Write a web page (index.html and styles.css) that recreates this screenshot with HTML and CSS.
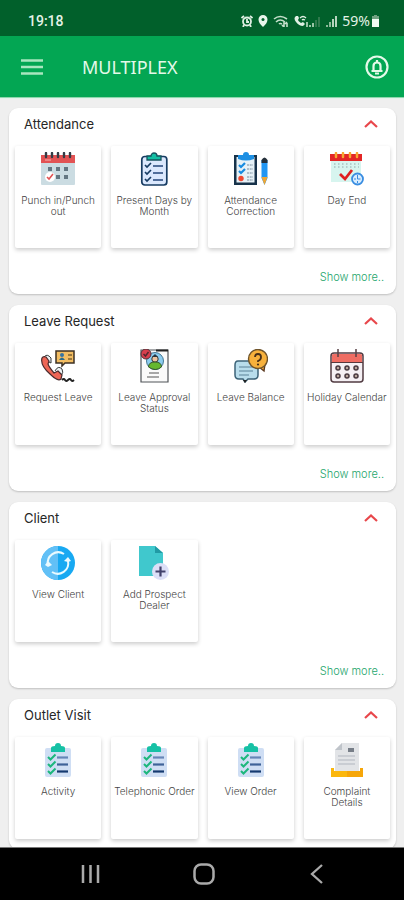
FILE: index.html
```html
<!DOCTYPE html>
<html lang="en">
<head>
<meta charset="utf-8">
<meta name="viewport" content="width=device-width, initial-scale=1">
<title>Multiplex</title>
<link rel="stylesheet" href="styles.css">
</head>
<body>
<svg class="sprite" aria-hidden="true">
  <symbol id="chevron" viewBox="0 0 14 8"><path d="M1 7 7 1.500 13 7" fill="none" stroke="#e8474b" stroke-width="2.200"/></symbol>
  <symbol id="punch" viewBox="0 0 34 34">
    <rect y="3" width="34" height="30" rx="1" fill="#cbdce2"/><path d="M0 3h34v8H0z" fill="#e25354"/>
    <path d="M5 1v4M11 1v4M17 1v4M23 1v4M29 1v4" stroke="#343c46" stroke-width="2.400" stroke-linecap="round"/>
    <path d="M4 8h6" stroke="#f6b3b0"/>
    <path d="M7 15h4v4H7zM15 15h4v4h-4zM23 15h4v4h-4zM15 23h4v4h-4zM23 23h4v4h-4z" fill="#647782"/>
    <circle cx="9" cy="25" r="5" fill="#fff"/><path d="m6 25 2 2 4-5" stroke="#e25354" stroke-width="1.600" fill="none"/>
  </symbol>
  <symbol id="present" viewBox="0 0 34 34">
    <rect x="4.800" y="4.500" width="25" height="28.500" rx="3" fill="#dbe8fd" stroke="#173c63" stroke-width="1.700"/>
    <path d="M10 8V4h4a3 3 0 0 1 6 0h4v4z" fill="#13bfa3" stroke="#17535f" stroke-width="1.300"/>
    <path d="m8 13 2 2 4-4M8 20l2 2 4-4M8 27l2 2 4-4" fill="none" stroke="#173c63" stroke-width="1.700"/>
    <path d="M16 14h10M16 21h10M16 28h10" stroke="#516e9b" stroke-width="2"/>
  </symbol>
  <symbol id="correction" viewBox="0 0 34 34">
    <path d="M0 3h23v30H0z" fill="#17324a"/><path d="M2.500 5h18v25.500h-18z" fill="#e6f1f7"/>
    <path d="M4 7V3h5a3 3 0 0 1 6 0h5v4q-8 3-16 0z" fill="#1d8fe3"/>
    <path d="m5 13 2 2 4-4M5 19l2 2 4-4" fill="none" stroke="#168be0" stroke-width="2.200"/>
    <path d="M13 13h6M13 17h6M13 21h6M13 25h6M13 28h6" stroke="#788c9c" stroke-dasharray="2 .7"/>
    <circle cx="7" cy="26.500" r="2.700" fill="#f04830"/>
    <path d="M27.500 8h6v18l-3 7-3-7z" fill="#2196f3"/><path d="M27.500 11V8q3-5 6 0v3z" fill="#25303b"/><path d="M27.500 25h6l-3 8z" fill="#f0a633"/>
  </symbol>
  <symbol id="dayend" viewBox="0 0 34 34">
    <path d="M1 5h30v25H1z" fill="#d7f5ef"/><path d="M0 2h32v7H0z" fill="#e32626"/>
    <path d="M6 1v4M13 1v4M20 1v4M27 1v4" stroke="#f7a832" stroke-width="2.500" stroke-linecap="round"/>
    <path d="M4 12h25M4 15h25" stroke="#91a9ab" stroke-width="1.200" stroke-dasharray="1.500 2.500"/>
    <path d="m10 22 5 5 7-9" fill="none" stroke="#df2020" stroke-width="2.800"/>
    <circle cx="27.500" cy="27" r="5.500" fill="#d8edff" stroke="#398de1" stroke-width="1.800"/><path d="M27.500 23v4h3M24 27h2M27.500 29v2" fill="none" stroke="#398de1"/>
  </symbol>
  <symbol id="phone" viewBox="0 0 34 34">
    <path d="M15 2h18v12h-9l-3 3v-3h-6z" fill="#f2bd62" stroke="#3c3125" stroke-width="1.500"/>
    <circle cx="21" cy="6" r="2" fill="#3674a3"/><path d="M18 11q3-5 6 0z" fill="#276b91"/><path d="M27 6h4M27 10h4" stroke="#7d6132" stroke-width="1.500"/>
    <path d="M3 8q3-4 7 1v5l-4-2M14 22q3-6 7-2 2 3-1 7" fill="#eef2f3" stroke="#34383a"/>
    <path d="M1 9q-2 7 8 16 8 8 11 5l1-4-4-4-4 2Q8 18 7 15l1-3-3-4q-3-1-4 1z" fill="#ee6656" stroke="#4a2b2d" stroke-width="1.200"/>
    <path d="M21 31q2-2 3 0t3 0 3 0 3 0" fill="none" stroke="#222" stroke-width="1.800"/>
  </symbol>
  <symbol id="approval" viewBox="0 0 34 34">
    <path d="M4 1h27v32H4z" fill="#fafafa" stroke="#505458" stroke-width="1.200"/><path d="M19 1.500h12" stroke="#222" stroke-width="2"/>
    <circle cx="18" cy="12" r="8.500" fill="#8bccef" stroke="#447794"/><circle cx="18" cy="10" r="3.200" fill="#edc29d" stroke="#333"/><path d="M11.500 18q0-5 6.500-5t6.500 5q-6 5-13 0z" fill="#65b82f" stroke="#33552c"/><path d="m15 8 3-3 3 3z" fill="#263440"/>
    <circle cx="9" cy="5" r="5" fill="#d83e4c" stroke="#543038"/><path d="m6.500 5 2 2 3-4" fill="none" stroke="#52272e" stroke-width="1.500"/>
    <path d="M12 24h10M10 28h12" stroke="#555"/>
  </symbol>
  <symbol id="balance" viewBox="0 0 34 34">
    <path d="M4 12h16q4 0 4 4v10q0 4-4 4h-6l-3 3-2-3H5q-4 0-4-4V16q0-4 3-4z" fill="#b8ddec" stroke="#3c6378" stroke-width="1.500"/>
    <path d="M5 18h14M5 22h14M5 26h10" stroke="#5a8298"/><path d="m9 31 2 3 2-3z" fill="#222"/>
    <path d="m25 18 5 4 1-7" fill="#f7b13c" stroke="#5b3920" stroke-width="1.400"/><circle cx="24" cy="10" r="9.500" fill="#f7b13c" stroke="#6f542b" stroke-width="1.400"/>
    <path d="M21 8q0-3 3-3t3 3-3 4v1" fill="none" stroke="#493018" stroke-width="1.800"/><circle cx="24" cy="15.500" r="1.100" fill="#493018"/>
  </symbol>
  <symbol id="holiday" viewBox="0 0 34 34">
    <rect x="1" y="4" width="32" height="29" rx="3" fill="#f5f0f4" stroke="#513b42" stroke-width="1.500"/><path d="M2 13V6q0-1 2-1h26q2 0 2 1v7z" fill="#ef6d63"/><path d="M1 13.500h32" stroke="#57383d"/>
    <path d="M8 0v8M26 0v8" stroke="#574045" stroke-width="1.500"/>
    <g fill="#baa79d" stroke="#493940" stroke-width="1.500"><circle cx="8" cy="19" r="2"/><circle cx="17" cy="19" r="2"/><circle cx="26" cy="19" r="2"/><circle cx="8" cy="27" r="2"/><circle cx="17" cy="27" r="2"/><circle cx="26" cy="27" r="2"/></g>
  </symbol>
  <symbol id="client" viewBox="0 0 34 34">
    <circle cx="17" cy="17" r="17" fill="#18a9f2"/><path d="M17 0a17 17 0 0 0 0 34z" fill="#62c0f6"/>
    <path d="M7 19a10.500 10.500 0 0 1 16-11M27 15a10.500 10.500 0 0 1-16 11" fill="none" stroke="#e9faff" stroke-width="2"/>
    <path d="m4 19 3-4 4 4-4 2zM30 15l-3-4-4 4 4 1z" fill="#e9faff"/>
  </symbol>
  <symbol id="prospect" viewBox="0 0 34 34">
    <path d="M2 0h16l8 7v23H2z" fill="#40c8cd"/><path d="M18 0v7h8z" fill="#219ba5"/><circle cx="23.500" cy="25.500" r="8.500" fill="#dcdff7"/><path d="M18.500 25.500h10M23.500 20.500v10" stroke="#42416b" stroke-width="2.200"/>
  </symbol>
  <symbol id="checklist" viewBox="0 0 34 34">
    <rect x="4" y="5" width="26" height="29" rx="2" fill="#cfdef4"/><path d="M10 9V5q0-2 4-2a3 3 0 0 1 6 0q4 0 4 2v4z" fill="#16c1a5"/>
    <path d="m7 14 2.500 2.500 5-5M7 21l2.500 2.500 5-5M7 28l2.500 2.500 5-5" fill="none" stroke="#1cb77c" stroke-width="2"/>
    <path d="M16 14.500h11" stroke="#6786b7" stroke-width="2.200"/><path d="M16 21.500h11" stroke="#3e6298" stroke-width="2.200"/><path d="M16 28.500h11" stroke="#153a70" stroke-width="2.200"/>
  </symbol>
  <symbol id="complaint" viewBox="0 0 34 34">
    <path d="M5 7 12 0h17v28H5z" fill="#e2e4e7"/><path d="M5 7h7V0z" fill="#bfc4ca"/><path d="M18 5h6v4h-6z" fill="#777e88"/><path d="M8 13h17M8 17h17M8 21h17" stroke="#b1b6bf"/>
    <path d="M1 25h3v3h26v-3h3v9H1z" fill="#fbb70d"/><path d="M17 28h13v-3h3v9H17z" fill="#f6a609"/>
  </symbol>
</svg>

<div class="screen">
  <div class="status">
    <time>19:18</time>
    <div class="indicators">
      <svg width="12" height="12" viewBox="0 0 12 12" fill="none" stroke="#e0f0e4" stroke-width="1.800" aria-label="Alarm"><circle cx="6" cy="6.500" r="4"/><path d="M6 4v3h2M.5 3 3 1M11.500 3 9 1M3 10l-1 2M9 10l1 2"/></svg>
      <svg width="10" height="12" viewBox="0 0 10 12" aria-label="Location"><path d="M5 0a4.500 4.500 0 0 1 4.500 4.500Q9.500 8 5 12 .5 8 .5 4.500A4.500 4.500 0 0 1 5 0z" fill="#e9f6ec"/><circle cx="5" cy="4.500" r="1.500" fill="#01602b"/></svg>
      <svg width="16" height="12" viewBox="0 0 16 12" fill="none" stroke="#c4dfca" stroke-width="1.600" aria-label="Wi-Fi"><path d="M1 4q6-5 13 0M3 7q4-4 9 0M6 9q1-1 3 0"/><path d="M11 7v5M9 10l2 2M14 12V8M12 9l2-2"/></svg>
      <svg width="27" height="12" viewBox="0 0 27 12" aria-label="Wi-Fi calling"><path d="M2 1q-3 2 0 6t7 4l2-2-2-2-2 1Q4 6 4 5l1-2-1-2z" fill="#e0f0e4"/><path d="M6 3q3-3 6 0M8 5q1-1 3 0" fill="none" stroke="#e0f0e4" stroke-width="1.300"/><path d="M13 7v5M16 10v2M19 8v4" stroke="#b4d5bb" stroke-width="1.700"/><path d="M22 5v7M25 2v10" stroke="#397e54" stroke-width="1.700"/></svg>
      <svg width="11" height="12" viewBox="0 0 11 12" aria-label="Signal"><path d="M1 10v2M4 7v5" stroke="#9bc2a5" stroke-width="1.800"/><path d="M7 4v8M10 1v11" stroke="#c9e0ce" stroke-width="1.800"/></svg>
      <span class="battery">59%<svg width="9" height="12" viewBox="0 0 9 12" aria-hidden="true"><path d="M3 0h3v1h2v4H1V1h2z" fill="#6fa180"/><path d="M1 4h7v8H1z" fill="#f0faf2"/></svg></span>
    </div>
  </div>
  <header class="appbar">
    <button class="icon-button" aria-label="Menu"><svg width="22" height="16" viewBox="0 0 22 16"><path d="M0 1.500h22M0 8h22M0 14.500h22" stroke="#a9e6bf" stroke-width="2.600"/></svg></button>
    <h1>MULTIPLEX</h1>
    <button class="icon-button" aria-label="Notifications"><svg width="24" height="24" viewBox="0 0 24 24"><circle cx="12" cy="12" r="10.500" fill="none" stroke="#e4f9e9" stroke-width="2.200"/><path d="M6.500 16h11M8.500 16V11q0-3.500 3.500-3.500t3.500 3.500v5M12 5v2" fill="none" stroke="#e4f9e9" stroke-width="2.200"/><path d="M10 18.500h4" stroke="#e4f9e9" stroke-width="2"/></svg></button>
  </header>

  <main>
    <section class="card">
      <div class="card-head"><h2>Attendance</h2><button class="toggle" aria-label="Collapse Attendance"><svg><use href="#chevron"/></svg></button></div>
      <div class="tiles">
        <button class="tile"><svg><use href="#punch"/></svg><span>Punch in/Punch out</span></button>
        <button class="tile"><svg><use href="#present"/></svg><span>Present Days by Month</span></button>
        <button class="tile"><svg><use href="#correction"/></svg><span>Attendance Correction</span></button>
        <button class="tile"><svg><use href="#dayend"/></svg><span>Day End</span></button>
      </div>
      <a class="more" href="#">Show more..</a>
    </section>
    <section class="card">
      <div class="card-head"><h2>Leave Request</h2><button class="toggle" aria-label="Collapse Leave Request"><svg><use href="#chevron"/></svg></button></div>
      <div class="tiles">
        <button class="tile"><svg><use href="#phone"/></svg><span>Request Leave</span></button>
        <button class="tile"><svg><use href="#approval"/></svg><span>Leave Approval Status</span></button>
        <button class="tile"><svg><use href="#balance"/></svg><span>Leave Balance</span></button>
        <button class="tile"><svg><use href="#holiday"/></svg><span>Holiday Calendar</span></button>
      </div>
      <a class="more" href="#">Show more..</a>
    </section>
    <section class="card">
      <div class="card-head"><h2>Client</h2><button class="toggle" aria-label="Collapse Client"><svg><use href="#chevron"/></svg></button></div>
      <div class="tiles">
        <button class="tile"><svg><use href="#client"/></svg><span>View Client</span></button>
        <button class="tile"><svg><use href="#prospect"/></svg><span>Add Prospect Dealer</span></button>
      </div>
      <a class="more" href="#">Show more..</a>
    </section>
    <section class="card">
      <div class="card-head"><h2>Outlet Visit</h2><button class="toggle" aria-label="Collapse Outlet Visit"><svg><use href="#chevron"/></svg></button></div>
      <div class="tiles">
        <button class="tile"><svg><use href="#checklist"/></svg><span>Activity</span></button>
        <button class="tile"><svg><use href="#checklist"/></svg><span>Telephonic Order</span></button>
        <button class="tile"><svg><use href="#checklist"/></svg><span>View Order</span></button>
        <button class="tile"><svg><use href="#complaint"/></svg><span>Complaint<br>Details</span></button>
      </div>
    </section>
  </main>

  <nav class="navbar" aria-label="System">
    <button class="icon-button" aria-label="Recent apps"><svg width="20" height="20" viewBox="0 0 20 20"><path d="M2 1v18M9.500 1v18M17 1v18" stroke="#aaa" stroke-width="2.500"/></svg></button>
    <button class="icon-button" aria-label="Home"><svg width="22" height="22" viewBox="0 0 22 22"><rect x="1.500" y="1.500" width="19" height="19" rx="6.500" fill="none" stroke="#aaa" stroke-width="2.500"/></svg></button>
    <button class="icon-button" aria-label="Back"><svg width="20" height="20" viewBox="0 0 20 20"><path d="M15 1 5 10l10 9" fill="none" stroke="#aaa" stroke-width="2.300"/></svg></button>
  </nav>
</div>
</body>
</html>
```
FILE: styles.css
```css
* { box-sizing: border-box; }
body { margin: 0; font-family: Inter, "Noto Sans", sans-serif; background: #eee; }
button { border: 0; padding: 0; background: none; font: inherit; color: inherit; }
h1, h2 { margin: 0; }
svg { flex: none; }
.sprite { display: none; }
.screen { display: flex; flex-direction: column; height: 100vh; }

.status {
  display: flex; align-items: center; justify-content: space-between;
  flex: none; height: 36px; padding: 5px 24px 0 28px;
  background: #01602b; color: #e4f3e7;
  font: 500 14px/16px Roboto, sans-serif;
}
.indicators { display: flex; align-items: center; gap: 5px; }
.battery { display: flex; align-items: center; gap: 1px; font: 400 14px/16px "Noto Sans", sans-serif; }

.appbar {
  display: flex; align-items: center;
  flex: none; height: 62px; padding: 0 15px 0 21px;
  background: #03a653; color: #e4f9e9;
  border-bottom: 1px solid #8fd5ad;
}
.appbar h1 { flex: 1; margin-left: 39px; font: 400 18px/24px "Noto Sans", sans-serif; }
.icon-button { display: grid; place-items: center; }

main {
  display: flex; flex-direction: column; gap: 11px;
  flex: 1; min-height: 0; overflow: hidden;
  padding: 9px 8px 0 9px; background: #efefef; border-top: 1px solid #e0f5ea;
}
.card {
  flex: none; padding: 0 6px 10px; border-radius: 9px;
  background: #fff; box-shadow: 0 1px 2px #0003;
}
.card-head {
  display: flex; align-items: center; justify-content: space-between;
  height: 38px; padding: 0 12px 6px 9px;
}
.card-head h2 { font-size: 13px; line-height: 16px; font-weight: 400; color: #262626; }
.toggle { display: grid; }
.toggle svg { width: 14px; height: 8px; }

.tiles { display: grid; grid-template-columns: repeat(4, 1fr); gap: 10px; }
.tile {
  display: flex; flex-direction: column; align-items: center; gap: 9px;
  min-height: 102px; padding-top: 6px; border-radius: 2px;
  background: #fff; box-shadow: 0 2px 4px #0003;
  font-size: 10px; line-height: 11px; font-weight: 300; color: #444;
}
.tile svg { width: 34px; height: 34px; }
.more {
  display: block; margin-top: 22px; padding-right: 6px;
  font-size: 11px; line-height: 14px; font-weight: 300;
  text-align: right; text-decoration: none; color: #24a56c;
}

.navbar {
  display: flex; align-items: center; justify-content: space-between;
  flex: none; height: 53px; padding: 0 77px 0 81px;
  background: #000; border-top: 1px solid #777;
}
```
